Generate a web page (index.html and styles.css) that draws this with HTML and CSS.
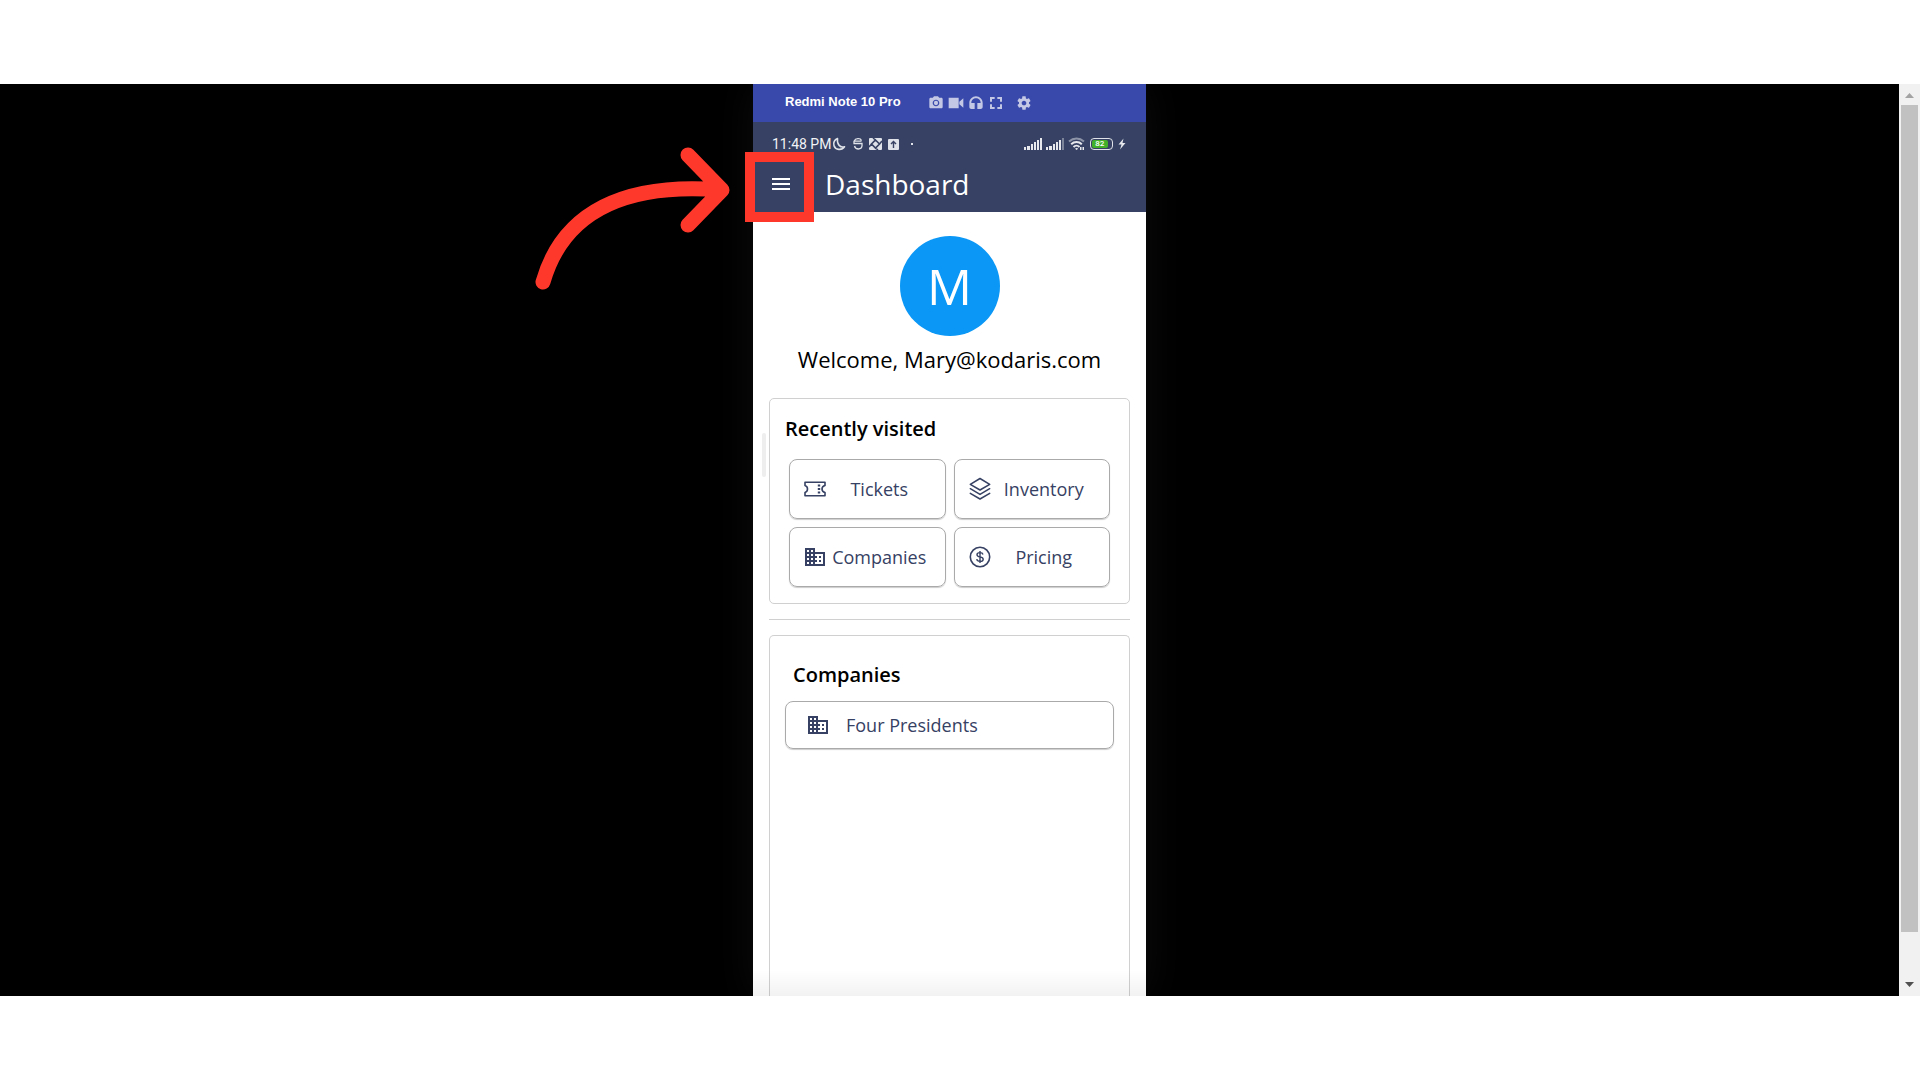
FILE: index.html
```html
<!DOCTYPE html>
<html lang="en">
  <head>
    <meta charset="utf-8">
    <title>Dashboard</title>
    <link rel="stylesheet" href="styles.css">
  </head>
  <body>
    <svg class="defs" width="0" height="0">
      <symbol id="building" viewBox="0 0 24 24">
        <path fill="currentColor" d="M12 7V3H2v18h20V7H12zM6 19H4v-2h2v2zm0-4H4v-2h2v2zm0-4H4V9h2v2zm0-4H4V5h2v2zm4 12H8v-2h2v2zm0-4H8v-2h2v2zm0-4H8V9h2v2zm0-4H8V5h2v2zm10 12h-8v-2h2v-2h-2v-2h2v-2h-2V9h8v10zm-2-8h-2v2h2v-2zm0 4h-2v2h2v-2z"/>
      </symbol>
    </svg>
    <div class="stage">
      <main class="phone">
        <div class="device-bar">
          <span class="device-name">Redmi Note 10 Pro</span>
          <div class="device-tools">
            <svg viewBox="0 0 24 24"><circle cx="12" cy="12" r="3.2"/><path d="M9 2L7.2 4H4c-1.100 0-2 .9-2 2v12c0 1.100.9 2 2 2h16c1.100 0 2-.9 2-2V6c0-1.100-.9-2-2-2h-3.200L15 2H9zm3 15c-2.760 0-5-2.240-5-5s2.240-5 5-5 5 2.240 5 5-2.240 5-5 5z"/></svg>
            <svg viewBox="0 0 24 24"><path d="M1 4h15v16H1zM17 10l6-5v14l-6-5z"/></svg>
            <svg viewBox="0 0 24 24"><path d="M12 2c-5.500 0-10 4.500-10 10v6c0 1.700 1.300 3 3 3h5v-9H5c0-3.900 3.100-7 7-7s7 3.100 7 7h-5v9h5c1.700 0 3-1.300 3-3v-6c0-5.500-4.500-10-10-10z"/></svg>
            <svg viewBox="0 0 24 24"><path d="M3 3h7v3H6v4H3zM14 3h7v7h-3V6h-4zM3 14h3v4h4v3H3zM18 14h3v7h-7v-3h4z"/></svg>
            <svg class="gear" viewBox="0 0 24 24"><path d="M19.430 12.980c.04-.32.07-.64.07-.98s-.03-.66-.07-.98l2.110-1.650c.19-.15.24-.42.12-.64l-2-3.460c-.12-.22-.39-.3-.61-.22l-2.490 1c-.52-.4-1.080-.73-1.690-.98l-.38-2.650C14.460 2.180 14.250 2 14 2h-4c-.25 0-.46.18-.49.42l-.38 2.650c-.61.25-1.170.59-1.690.98l-2.490-1c-.23-.09-.49 0-.61.22l-2 3.460c-.13.22-.07.49.12.64l2.110 1.650c-.04.32-.07.65-.07.98s.03.66.07.98l-2.110 1.650c-.19.15-.24.42-.12.64l2 3.460c.12.22.39.3.61.22l2.490-1c.52.4 1.080.73 1.690.98l.38 2.650c.03.24.24.42.49.42h4c.25 0 .46-.18.49-.42l.38-2.650c.61-.25 1.170-.59 1.690-.98l2.490 1c.23.09.49 0 .61-.22l2-3.460c.12-.22.07-.49-.12-.64l-2.110-1.650zM12 15.500c-1.930 0-3.500-1.570-3.500-3.500s1.570-3.500 3.500-3.500 3.500 1.570 3.500 3.500-1.570 3.500-3.500 3.500z"/></svg>
          </div>
        </div>

        <header class="app-head">
          <div class="status">
            <span>11:48 PM</span>
            <svg class="status-icons" width="84" height="14" viewBox="0 0 84 14">
              <path d="M5.500 1.500C2.500 2.500 1 5.800 2 8.700c1.500 4.200 7.700 5.200 10.500 1C8.500 11 4.500 7.500 5.500 1.500z" fill="none" stroke="#dfe2e8" stroke-width="1.600" stroke-linejoin="round"/>
              <path d="M29.500 3.500C28.500 1 23.500 1 22 4.200v2.300h8V9c-.5 4-6.500 4-7.500 0M22 4.200h7.500" fill="none" stroke="#dfe2e8" stroke-width="1.300"/>
              <rect x="37" y="1" width="13" height="12" rx="1" fill="#dfe2e8"/>
              <path d="M43.500 3l4 4-4 4-4-4zM43.500 3L41 1M47.500 7l2.500-3M43.500 11l2.500 2M39.500 7L37 10" fill="none" stroke="#364163" stroke-width="1.600"/>
              <rect x="56" y="2" width="11" height="11" rx="1" fill="#dfe2e8"/>
              <path d="M61.500 11V5M59 7l2.500-2.500L64 7" fill="none" stroke="#364163" stroke-width="1.400"/>
              <rect x="79" y="6" width="2" height="2" fill="#dfe2e8"/>
            </svg>
            <svg class="signal" width="62" height="14" viewBox="0 0 62 14">
              <g fill="#e6e8ed">
                <path d="M0 10h2v3H0zM3 9h3v4H3zM7 7h2v6H7zM10 5h2v8h-2zM13 3h2v10h-2zM16 1h2v12h-2z"/>
                <path d="M22 10h2v3h-2zM25 9h3v4h-3zM29 7h2v6h-2zM32 5h2v8h-2zM35 3h2v10h-2z"/>
                <path d="M38 1h2v12h-2z" opacity=".4"/>
              </g>
              <g fill="none" stroke="#e6e8ed" stroke-width="2">
                <path d="M45 4.500c4.500-4 10.500-4 15 0" opacity=".5"/>
                <path d="M47.200 7.200c3-2.900 7.600-2.900 10.600 0M49.500 10c1.700-1.700 4.300-1.700 6 0"/>
              </g>
              <path d="M51 11.700c1-.8 2.200-.8 3.200 0L52.600 13zM56 10h1.500v3H56zM58.500 10H60v3h-1.500z" fill="#e6e8ed"/>
            </svg>
            <span class="battery"><span>82</span></span>
            <svg class="bolt" width="8" height="12" viewBox="0 0 8 12"><path d="M5.500.5L.5 6.500h3l-1.500 5 5.500-6.500h-3z" fill="#e6e8ed"/></svg>
          </div>
          <div class="title-row">
            <button class="menu" aria-label="Menu">
              <svg width="20" height="14" viewBox="0 0 20 14"><path d="M1 1h18v2H1zM1 6h18v2H1zM1 11h18v2H1z" fill="#fff"/></svg>
            </button>
            <h1>Dashboard</h1>
          </div>
        </header>

        <section class="welcome">
          <div class="avatar">M</div>
          <p>Welcome, Mary@kodaris.com</p>
        </section>

        <section class="card">
          <h2>Recently visited</h2>
          <div class="tiles">
            <button class="tile">
              <svg viewBox="0 0 24 24" fill="none" stroke="currentColor" stroke-width="1.600"><path d="M2 5.300h20v3.200c-2 .5-3 1.800-3 3.500s1 3 3 3.500v3.200H2v-3.200C3.500 15 4.500 13.700 4.500 12S3.500 9 2 8.500z" stroke-linejoin="round"/><path d="M16 7.500v2M16 11v2M16 14.500v2" stroke-width="2.400"/></svg>
              <span>Tickets</span>
            </button>
            <button class="tile">
              <svg viewBox="0 0 24 24" fill="none" stroke="currentColor" stroke-width="1.500" stroke-linejoin="round" stroke-linecap="round"><path d="M12 1.500l9.700 5.800L12 13 2.300 7.300zM2.300 11.700L12 17.400l9.700-5.700M2.300 16.300L12 22l9.700-5.700"/></svg>
              <span>Inventory</span>
            </button>
            <button class="tile">
              <svg><use href="#building"/></svg>
              <span>Companies</span>
            </button>
            <button class="tile">
              <svg viewBox="0 0 24 24" fill="none" stroke="currentColor" stroke-width="1.600"><circle cx="12" cy="12" r="9.700"/><path d="M15 9.500c-.3-1.200-1.300-1.900-3-1.900-1.800 0-3 .8-3 2.100 0 3.200 6.200 1.200 6.200 4.500 0 1.400-1.300 2.200-3.200 2.200-1.800 0-3-.8-3.300-2.200M12 6v12" stroke-width="1.400"/></svg>
              <span>Pricing</span>
            </button>
          </div>
        </section>

        <hr>

        <section class="card companies">
          <h2>Companies</h2>
          <button class="company">
            <svg><use href="#building"/></svg>
            <span>Four Presidents</span>
          </button>
        </section>

        <div class="handle"></div>
        <div class="highlight"></div>
        <svg class="arrow" width="200" height="150" viewBox="0 0 200 150">
          <path d="M10 137C30 67 92 37 189 45M155 10L189 45L155 80" fill="none" stroke="#ff382c" stroke-width="15" stroke-linecap="round" stroke-linejoin="round"/>
        </svg>
      </main>

      <div class="scrollbar">
        <svg width="9" height="5" viewBox="0 0 9 5"><path d="M0 5L4.500 0 9 5z" fill="#a3a3a3"/></svg>
        <div class="thumb"></div>
        <svg width="9" height="5" viewBox="0 0 9 5"><path d="M0 0h9L4.500 5z" fill="#505050"/></svg>
      </div>
    </div>
  </body>
</html>
```
FILE: styles.css
```css
* { box-sizing: border-box; }
body {
  margin: 0;
  padding: 84px 0;
  background: #fff;
  font-family: "Open Sans", sans-serif;
  color: #000;
}
h1, h2, p { margin: 0; }
button {
  font: inherit;
  color: inherit;
  background: none;
  border: 0;
  padding: 0;
}
.defs { position: absolute; }
.stage {
  display: flex;
  height: calc(100vh - 168px);
  min-height: 600px;
  background: #000;
  overflow: hidden;
}
.phone {
  position: relative;
  display: flex;
  flex-direction: column;
  width: 100%;
  max-width: 393px;
  margin: 0 auto;
  background: #fff;
  box-shadow: 0 0 40px rgba(255, 255, 255, 0.05);
}
.phone::after {
  content: "";
  position: absolute;
  left: 0;
  right: 0;
  bottom: 0;
  height: 26px;
  background: linear-gradient(transparent, rgba(0, 0, 0, 0.05));
}

/* emulator bar */
.device-bar {
  display: flex;
  align-items: center;
  gap: 27px;
  height: 38px;
  padding: 0 32px;
  background: #3949ab;
  color: #fff;
}
.device-name {
  padding-bottom: 2px;
  font: bold 13px/18px "Liberation Sans", sans-serif;
}
.device-tools {
  display: flex;
  gap: 4px;
}
.device-tools svg {
  width: 16px;
  height: 16px;
  fill: #c4c8e4;
}
.device-tools .gear { margin-left: 8px; }

/* app header */
.app-head {
  height: 90px;
  background: #364163;
  color: #fff;
}
.status {
  display: flex;
  align-items: center;
  height: 44px;
  padding: 0 20px 0 19px;
  font: 14px/20px Roboto, sans-serif;
  color: #f2f3f6;
}
.status-icons { margin-left: 1px; }
.signal { margin-left: auto; }
.battery {
  width: 23px;
  height: 12px;
  margin: 0 5px 0 4px;
  padding: 1px;
  border: 1px solid #dfe2e8;
  border-radius: 4px;
}
.battery span {
  display: block;
  width: 82%;
  border-radius: 2px;
  background: #43b02a;
  color: #fff;
  font-size: 8px;
  font-weight: 500;
  line-height: 8px;
  text-align: center;
}
.title-row {
  display: flex;
  align-items: center;
  height: 36px;
  padding-left: 18px;
  gap: 34px;
}
.menu { display: flex; }
h1 {
  font-size: 28px;
  font-weight: 400;
  line-height: 36px;
}

.welcome {
  padding: 24px 0;
  text-align: center;
}
.avatar {
  width: 100px;
  height: 100px;
  margin: 0 auto 8px;
  border-radius: 50%;
  background: #0a97f5;
  color: #fff;
  font-size: 50px;
  line-height: 100px;
}
.welcome p {
  font-size: 22px;
  line-height: 30px;
}

.card {
  margin: 0 16px;
  padding: 15px;
  border: 1px solid #d0d0d0;
  border-radius: 5px;
}
h2 {
  font-size: 20px;
  font-weight: 600;
  line-height: 30px;
}
.tiles {
  display: grid;
  grid-template-columns: 1fr 1fr;
  gap: 8px;
  padding: 15px 4px 1px;
}
.tile, .company {
  display: flex;
  align-items: center;
  border: 1px solid #aaa;
  border-radius: 8px;
  box-shadow: 0 1px 1px rgba(0, 0, 0, 0.2);
  color: #364163;
  font-size: 18px;
}
.tile {
  height: 60px;
  padding: 0 13px;
}
.tile span { flex: 1; }
.tile svg, .company svg {
  flex: none;
  width: 24px;
  height: 24px;
}
hr {
  width: calc(100% - 32px);
  margin: 15px 16px;
  border: 0;
  border-top: 1px solid #d0d0d0;
}
.companies {
  flex: 1;
  border-bottom: 0;
  border-radius: 5px 5px 0 0;
  padding-top: 24px;
}
.companies h2 { padding-left: 8px; }
.company {
  width: 100%;
  height: 48px;
  margin-top: 11px;
  padding: 0 20px;
  gap: 16px;
}

/* overlays */
.handle {
  position: absolute;
  left: 9px;
  top: 349px;
  width: 4px;
  height: 44px;
  border-radius: 2px;
  background: #eee;
}
.highlight {
  position: absolute;
  left: -8px;
  top: 68px;
  width: 69px;
  height: 70px;
  border: 10px solid #ff382c;
}
.arrow {
  position: absolute;
  left: -220px;
  top: 61px;
}

.scrollbar {
  display: flex;
  flex-direction: column;
  align-items: center;
  gap: 7px;
  width: 21px;
  padding: 9px 2px;
  background: #f1f1f1;
}
.thumb {
  width: 100%;
  height: 827px;
  margin-bottom: auto;
  background: #c1c1c1;
}
```
